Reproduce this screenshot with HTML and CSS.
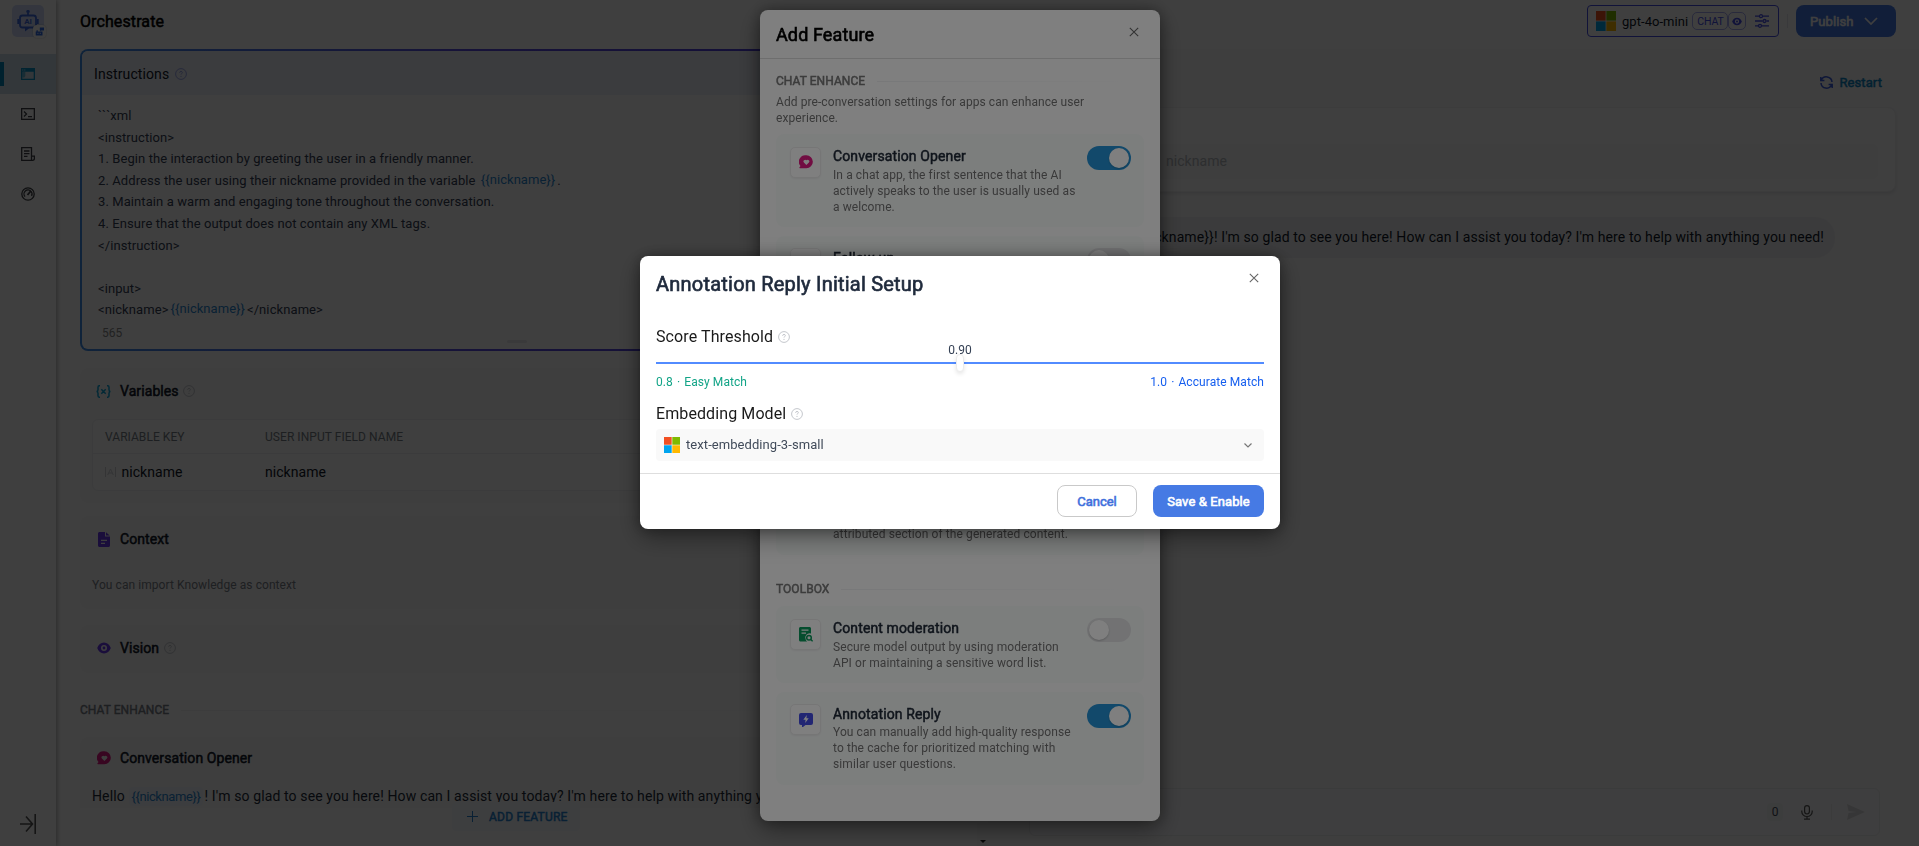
FILE: index.html
```html
<!DOCTYPE html>
<html lang="en">
<head>
<meta charset="utf-8">
<title>Orchestrate</title>
<link rel="stylesheet" href="styles.css">
</head>
<body>
<svg class="defs" aria-hidden="true">
  <symbol id="help" viewBox="0 0 12 12"><circle cx="6" cy="6" r="5.4" fill="none" stroke="currentColor" stroke-width="1"/><path d="M4.6 4.8c0-.9.6-1.4 1.4-1.4s1.4.5 1.4 1.2c0 .9-1.4 1-1.4 2" fill="none" stroke="currentColor"/><circle cx="6" cy="8.4" r=".6" fill="currentColor"/></symbol>
  <symbol id="x" viewBox="0 0 10 10"><path d="M.8.8l8.400 8.400M9.200.8L.8 9.200" stroke="currentColor" fill="none" stroke-width="1.100"/></symbol>
  <symbol id="heart" viewBox="0 0 14 14"><path fill="currentColor" fill-rule="evenodd" d="M7.400.3a6.400 6.400 0 1 1 0 12.900H.9c-.5 0-.7-.5-.4-.9l1-1.300A6.500 6.500 0 0 1 7.400.3zM7.400 10l2.500-2.500a1.600 1.600 0 0 0-2.500-2.200 1.600 1.600 0 0 0-2.500 2.200z"/></symbol>
  <symbol id="eye" viewBox="0 0 14 12"><path fill="currentColor" fill-rule="evenodd" d="M7 .6c3.200 0 5.600 2.200 6.800 5.400C12.600 9.200 10.200 11.400 7 11.400S1.400 9.200.2 6C1.400 2.800 3.800.6 7 .6zM7 3a3 3 0 1 0 0 6 3 3 0 0 0 0-6zm0 1.600a1.400 1.400 0 1 1 0 2.800 1.400 1.400 0 0 1 0-2.800z"/></symbol>
  <symbol id="ms" viewBox="0 0 16 16"><path fill="#f25022" d="M0 0h7.700v7.700H0z"/><path fill="#7fba00" d="M8.300 0H16v7.700H8.300z"/><path fill="#00a4ef" d="M0 8.300h7.700V16H0z"/><path fill="#ffb900" d="M8.300 8.300H16V16H8.300z"/></symbol>
</svg>

<div class="app">
  <nav class="sidebar">
    <div class="app-icon">
      <svg width="22" height="24" viewBox="0 0 22 24" fill="none" stroke="#3f6be0" stroke-width="1.800"><path d="M11 1v5M9.300 2.500h3.400"/><rect x="3" y="6.500" width="16" height="12" rx="2.500"/><path d="M1.200 10v5M20.800 10v5"/><path d="M8 19v3.500l4.500-3.500z" fill="#3f6be0" stroke="none"/></svg>
      <b class="ai">AI</b>
      <span class="badge"><svg width="9" height="9" viewBox="0 0 9 9" fill="#2f6be8"><path d="M4.800.5H9v3H6.300l-1 .8v-.8h-.5zM1.500 3.200h1.300v1.200h4.700v4H.7v-4h.8z"/><path d="M2.300 6.300h1.200M4.800 6.300H6" stroke="#fff" stroke-width=".8"/></svg></span>
    </div>
    <a class="nav-item active"><svg width="14" height="12" viewBox="0 0 14 12"><path fill="currentColor" fill-rule="evenodd" d="M0 0h14v12H0zM1.300 3.800v6.900h11.400V3.800zM1.300 1.500v1h1v-1zm2 0v1h1v-1z"/><path d="M1.300 4h3v4l-1 1.500h-2z" fill="currentColor" opacity=".55"/></svg></a>
    <a class="nav-item"><svg width="14" height="12" viewBox="0 0 14 12" fill="none" stroke="currentColor" stroke-width="1.300"><rect x=".65" y=".65" width="12.700" height="10.700"/><path d="M3 3.500l2.500 2.500L3 8.500M7 8.700h4"/></svg></a>
    <a class="nav-item"><svg width="14" height="14" viewBox="0 0 14 14" fill="none" stroke="currentColor" stroke-width="1.300"><path d="M10.500 9V.7H.7v12.600h11a1.700 1.700 0 0 0 1.700-1.700V9.200h-2.900v4M3 4h5.500M3 6.700h5.500M3 9.300h3.500"/></svg></a>
    <a class="nav-item"><svg width="14" height="14" viewBox="0 0 14 14" fill="none" stroke="currentColor" stroke-width="1.300"><circle cx="7" cy="7" r="6.200"/><circle cx="7" cy="7" r="4" stroke-dasharray="17 8.100" transform="rotate(138 7 7)"/><path d="M6.500 8L9.800 4" stroke-width="1.800"/></svg></a>
    <a class="collapse"><svg width="16" height="20" viewBox="0 0 16 20" fill="none" stroke="currentColor" stroke-width="1.600"><path d="M0 10h12M6 2.500L12.500 10 6 17.500M15.200 0v20"/></svg></a>
  </nav>

  <main class="main">
    <header class="topbar">
      <h1>Orchestrate</h1>
      <div class="top-actions">
        <div class="model"><svg class="ms20"><use href="#ms"/></svg><span class="model-name">gpt-4o-mini</span><span class="tag">CHAT</span><span class="tag tag-eye"><svg width="10" height="9"><use href="#eye"/></svg></span><svg class="sliders" width="14" height="14" viewBox="0 0 14 14" fill="none" stroke="currentColor" stroke-width="1.300"><path d="M0 2.200h4M8 2.200h6M0 7h7.500M11.500 7H14M0 11.800h3M7 11.800h7"/><circle cx="6" cy="2.200" r="1.500"/><circle cx="9.500" cy="7" r="1.500"/><circle cx="5" cy="11.800" r="1.500"/></svg></div>
        <i class="sep"></i>
        <button class="publish">Publish<svg width="14" height="8" viewBox="0 0 14 8" fill="none" stroke="currentColor" stroke-width="1.700"><path d="M1 1l6 6 6-6"/></svg></button>
      </div>
    </header>

    <div class="panes">
      <section class="left">
        <div class="instructions"><div class="ins-inner">
          <div class="ins-head">Instructions<svg class="help"><use href="#help"/></svg></div>
          <pre class="prompt">```xml
&lt;instruction&gt;
1. Begin the interaction by greeting the user in a friendly manner.
2. Address the user using their nickname provided in the variable <em>{{nickname}}</em>.
3. Maintain a warm and engaging tone throughout the conversation.
4. Ensure that the output does not contain any XML tags.
&lt;/instruction&gt;

&lt;input&gt;
&lt;nickname&gt;<em>{{nickname}}</em>&lt;/nickname&gt;</pre>
          <div class="ins-foot"><span>565</span><i class="grip"></i></div>
        </div></div>

        <div class="panel variables">
          <h2><svg class="ic cyan" width="15" height="13" viewBox="0 0 15 13" fill="none" stroke="currentColor" stroke-width="1.500"><path d="M4 .8H3.200Q2 .8 2 2.200v2.500Q2 6.500.5 6.500 2 6.500 2 8.300v2.500q0 1.400 1.200 1.400H4M11 .8h.8q1.200 0 1.200 1.400v2.500q0 1.800 1.500 1.800-1.500 0-1.500 1.800v2.500q0 1.400-1.200 1.400H11M5.300 4.300l4.400 4.400M9.700 4.300L5.300 8.700"/></svg>Variables<svg class="help"><use href="#help"/></svg></h2>
          <div class="table">
            <div class="tr th"><span>VARIABLE KEY</span><span>USER INPUT FIELD NAME</span></div>
            <div class="tr"><span><svg class="va" width="11" height="10" viewBox="0 0 11 10" fill="none" stroke="currentColor"><path d="M.5 0v10M10.500 0v10M2.700 8l2.800-6 2.800 6M3.700 6h3.600"/></svg>nickname</span><span>nickname</span></div>
          </div>
        </div>

        <div class="panel context">
          <h2><svg class="ic purple" width="12" height="15" viewBox="0 0 12 15"><path fill="currentColor" fill-rule="evenodd" d="M1.500 0H7v4.500h5v9c0 .8-.7 1.500-1.500 1.500h-9C.7 15 0 14.300 0 13.500v-12C0 .7.7 0 1.500 0zM3 7.700V9h6V7.700zm0 3V12h4v-1.300zM8 .3L11.700 3.500H8z"/></svg>Context</h2>
          <p>You can import Knowledge as context</p>
        </div>

        <div class="panel vision">
          <h2><svg class="ic purple" width="14" height="12"><use href="#eye"/></svg>Vision<svg class="help"><use href="#help"/></svg></h2>
        </div>

        <div class="group">CHAT ENHANCE<i></i></div>

        <div class="panel opener">
          <h2><svg class="ic pink" width="14" height="14"><use href="#heart"/></svg>Conversation Opener</h2>
          <p>Hello <em>{{nickname}}</em>! I'm so glad to see you here! How can I assist you today? I'm here to help with anything you need!</p>
        </div>
        <div class="add-bar"><button class="add"><svg width="11" height="11" viewBox="0 0 11 11" stroke="currentColor" fill="none"><path d="M5.500 0v11M0 5.500h11"/></svg>ADD FEATURE</button></div>
      </section>
      <div class="scroll"><i></i></div>

      <section class="right">
        <div class="restart"><svg width="13" height="13" viewBox="0 0 13 13" fill="none" stroke="currentColor" stroke-width="1.500"><path d="M.8 1v3.600h3.600M1.200 4.400A5.600 5.600 0 0 1 12 6M12.200 12V8.400H8.600M11.800 8.600A5.600 5.600 0 0 1 1 7"/></svg>Restart</div>
        <div class="form"><div class="field">nickname</div></div>
        <div class="chat"><div class="bubble">Hello {{nickname}}! I'm so glad to see you here! How can I assist you today? I'm here to help with anything you need!</div></div>
        <div class="composer"><span class="count">0</span><svg class="mic" width="12" height="15" viewBox="0 0 12 15" fill="none" stroke="currentColor" stroke-width="1.200"><rect x="3.600" y=".6" width="4.800" height="8.400" rx="2.400"/><path d="M.8 5.500v1.300a5.200 4.700 0 0 0 10.400 0V5.500M6 11.500V14M3 14.200h6"/></svg><i></i><svg width="18" height="16" viewBox="0 0 18 16" fill="currentColor" class="send"><path d="M0 0l18 8L0 16l1.500-7L9 8 1.500 7z"/></svg></div>
      </section>
    </div>
  </main>
</div>

<div class="overlay o1">
  <div class="modal features">
    <div class="f-head">Add Feature<svg class="close"><use href="#x"/></svg></div>
    <div class="f-body">
      <div class="group strong">CHAT ENHANCE<i></i></div>
      <p class="desc">Add pre-conversation settings for apps can enhance user experience.</p>
      <div class="cards top">
        <div class="card"><span class="tile pink"><svg width="14" height="14"><use href="#heart"/></svg></span><div class="txt"><h3>Conversation Opener</h3><p>In a chat app, the first sentence that the AI actively speaks to the user is usually used as a welcome.</p></div><span class="toggle on"></span></div>
        <div class="card"><span class="tile"></span><div class="txt"><h3>Follow-up</h3><p>Setting up next questions suggestion can give users a better chat.</p></div><span class="toggle"></span></div>
        <div class="card grow"><span class="tile"></span><div class="txt"><h3>Text to Speech</h3></div><span class="toggle"></span></div>
        <div class="card grow"><span class="tile"></span><div class="txt"><h3>Speech to Text</h3></div><span class="toggle"></span></div>
        <div class="card"><span class="tile"></span><div class="txt"><h3>Citations and Attributions</h3><p>Show source document and<br>attributed section of the generated content.</p></div><span class="toggle"></span></div>
      </div>
      <div class="group strong tb">TOOLBOX<i></i></div>
      <div class="cards">
        <div class="card"><span class="tile green"><svg width="14" height="15" viewBox="0 0 14 15"><path fill="currentColor" fill-rule="evenodd" d="M1.500 0h9c.8 0 1.500.7 1.500 1.500v5a4.300 4.300 0 0 0-5.300 6c.3.900.8 1.500 1.500 2H1.500C.7 14.500 0 13.800 0 13V1.500C0 .7.7 0 1.500 0zM2.500 2.500v1.200h7V2.500zm0 3v1.200h4.500V5.500z"/><circle cx="10" cy="10.700" r="2.300" fill="none" stroke="currentColor" stroke-width="1.500"/><path d="M11.600 12.300l2 2" stroke="currentColor" stroke-width="1.500"/></svg></span><div class="txt"><h3>Content moderation</h3><p>Secure model output by using moderation API or maintaining a sensitive word list.</p></div><span class="toggle"></span></div>
        <div class="card"><span class="tile indigo"><svg width="14" height="14" viewBox="0 0 14 14"><path fill="currentColor" fill-rule="evenodd" d="M2 0h10a2 2 0 0 1 2 2v8a2 2 0 0 1-2 2H6.500L4 14H3v-2H2a2 2 0 0 1-2-2V2a2 2 0 0 1 2-2zm5.800 2L4.300 6.700h2.300L6.200 10l3.500-4.700H7.400z"/></svg></span><div class="txt"><h3>Annotation Reply</h3><p>You can manually add high-quality response to the cache for prioritized matching with similar user questions.</p></div><span class="toggle on"></span></div>
      </div>
    </div>
  </div>
</div>

<div class="overlay o2">
  <div class="modal setup">
    <div class="s-body">
      <div class="s-title">Annotation Reply Initial Setup<svg class="close"><use href="#x"/></svg></div>
      <div class="label">Score Threshold<svg class="help"><use href="#help"/></svg></div>
      <div class="slider"><span class="val">0.90</span><span class="thumb"></span></div>
      <div class="ends"><span class="easy">0.8 <i>·</i> Easy Match</span><span class="acc">1.0 <i>·</i> Accurate Match</span></div>
      <div class="label l2">Embedding Model<svg class="help"><use href="#help"/></svg></div>
      <div class="select"><svg class="ms16"><use href="#ms"/></svg><span>text-embedding-3-small</span><svg class="chev" width="8" height="5" viewBox="0 0 8 5" fill="none" stroke="currentColor" stroke-width="1.200"><path d="M.5.5L4 4 7.500.5"/></svg></div>
    </div>
    <div class="s-foot"><button class="cancel">Cancel</button><button class="save">Save &amp; Enable</button></div>
  </div>
</div>
</body>
</html>
```
FILE: styles.css
```css
* { box-sizing: border-box; }
body { margin: 0; height: 846px; overflow: hidden; background: #fff; font-family: Roboto, sans-serif; color: #101828; font-size: 14px; }
h1, h2, h3, p, pre { margin: 0; font-weight: 400; }
em, i { font-style: normal; }
svg { flex: none; display: block; }
button { font-family: inherit; border: 0; padding: 0; }
.defs { position: absolute; width: 0; height: 0; }
.help { width: 12px; height: 12px; color: #c4c7cc; }

.app { display: flex; height: 846px; }
.sidebar { width: 56px; flex: none; display: flex; flex-direction: column; align-items: center; padding-top: 5px; box-shadow: 1px 0 5px rgba(0, 0, 0, .35); z-index: 1; }
.app-icon { position: relative; width: 32px; height: 32px; border-radius: 5px; background: #d0dbf8; display: flex; justify-content: center; padding-top: 4px; margin-bottom: 17px; }
.ai { position: absolute; left: 0; width: 32px; top: 11px; text-align: center; font-size: 8px; line-height: 11px; color: #3f6be0; }
.badge { position: absolute; left: 21px; top: 20px; width: 13px; height: 13px; border-radius: 4px; background: #fff; box-shadow: 0 0 2px rgba(0, 0, 0, .25); display: flex; align-items: center; justify-content: center; }
.nav-item { width: 56px; height: 40px; display: flex; align-items: center; justify-content: center; color: #3c3f44; }
.nav-item.active { background: #ccdee8; color: #0891c7; position: relative; }
.nav-item.active::before { content: ""; position: absolute; left: 0; top: 8px; width: 4px; height: 24px; background: #0284b8; }
.collapse { margin-top: auto; margin-bottom: 12px; color: #555; }

.main { flex: 1; min-width: 0; display: flex; flex-direction: column; }
.topbar { height: 49px; flex: none; display: flex; justify-content: space-between; padding: 5px 23px 0 24px; }
h1 { font-size: 16px; line-height: 33px; color: #000; -webkit-text-stroke: .5px; letter-spacing: .1px; }
.top-actions { display: flex; height: 32px; align-items: center; }
.model { width: 192px; height: 32px; border: 1px solid #444ce7; border-radius: 4px; display: flex; align-items: center; padding: 0 8px; }
.ms20 { width: 20px; height: 20px; }
.model-name { font-size: 13px; margin: 0 4px 0 6px; color: #101828; letter-spacing: .05px; }
.tag { height: 18px; border: 1px solid #a4a9f0; border-radius: 5px; font-size: 10.500px; line-height: 17px; color: #444ce7; padding: 0 4px; width: 36px; text-align: center; letter-spacing: -.1px; }
.tag-eye { width: 18px; padding: 0 3px; display: flex; align-items: center; }
.sliders { color: #444ce7; margin-left: 9px; }
.sep { width: 1px; height: 14px; background: #e4e7ec; margin: 0 8px; }
.publish { width: 100px; height: 32px; border-radius: 8px; background: #467ae4; color: #fff; font-size: 13px; display: flex; align-items: center; gap: 10px; padding-left: 14px; -webkit-text-stroke: .6px; letter-spacing: .1px; }

.panes { flex: 1; min-height: 0; display: flex; }
.left { width: 921px; padding: 0 24px; display: flex; flex-direction: column; flex: none; overflow: hidden; }
.instructions { height: 302px; flex: none; padding: 2px; border-radius: 8px; background: linear-gradient(90deg, #3f8de8, #5a4ae0 45%, #4638d8); }
.ins-inner { height: 298px; border-radius: 6px; background: #fff; overflow: hidden; display: flex; flex-direction: column; }
.ins-head { height: 44px; background: #eef1fb; padding: 1px 0 0 12px; display: flex; align-items: center; gap: 6px; line-height: 44px; letter-spacing: .1px; }
.ins-head .help { color: #9aa5e8; }
.prompt { padding: 10px 16px 0; font-family: Roboto, sans-serif; font-size: 13px; line-height: 21.600px; letter-spacing: .09px; color: #344054; height: 226px; }
.prompt em { color: #2a86d0; padding: 0 2px; position: relative; top: -1px; letter-spacing: .04px; }
.ins-foot { display: flex; font-size: 12px; color: #888; line-height: 24px; padding-left: 20px; position: relative; }
.grip { position: absolute; left: 425px; top: 19px; width: 20px; height: 3px; border-radius: 2px; background: #e8e9ec; }

.panel { background: #fafafa; border-radius: 8px; padding: 0 12px; flex: none; }
.panel h2 { font-size: 14px; display: flex; align-items: center; height: 46px; -webkit-text-stroke: .5px; color: #101828; letter-spacing: .08px; padding-left: 4px; }
.panel h2 .help { margin-left: 5px; -webkit-text-stroke: 0; }
.ic { margin-right: 9px; }
.cyan { color: #0ba5d8; } .purple { color: #6938ef; } .pink { color: #e31b84; } .green { color: #0a9a5c; } .indigo { color: #444ce7; }
.variables { margin-top: 17px; height: 135px; }
.variables h2 .help { margin-left: 4px; }
.table { margin-top: 5px; border: 1px solid #eeeff1; border-radius: 6px; height: 72px; background: #fcfcfc; }
.tr { display: flex; height: 36px; align-items: center; padding-left: 12px; color: #101828; letter-spacing: .05px; }
.tr > span { width: 160px; display: flex; align-items: center; white-space: nowrap; }
.tr.th { height: 34px; border-bottom: 1px solid #eeeff1; font-size: 12px; color: #777c86; }
.va { margin-right: 5.500px; color: #d0d2d6; }
.context { margin-top: 13px; height: 93px; }
.context h2 { height: 46px; padding-left: 6px; }
.context .ic { margin-right: 10px; }
.context p { font-size: 12px; color: #7b8089; margin-top: 15px; letter-spacing: .07px; line-height: 16px; }
.vision { margin-top: 16px; height: 48px; }
.vision h2 { height: 46px; padding-left: 5px; }
.group { display: flex; align-items: center; font-size: 12px; color: #777c86; line-height: 16px; flex: none; white-space: nowrap; -webkit-text-stroke: .4px; letter-spacing: .05px; }
.group i { flex: 1; height: 1px; margin-left: 12px; background: linear-gradient(90deg, #f0f1f3, rgba(240, 241, 243, 0)); }
.left .group { margin: 29px 0 19px; }
.opener { height: 71px; border-radius: 8px 8px 0 0; overflow: hidden; }
.opener h2 { height: 41px; padding-left: 5px; }
.opener p { font-size: 14px; white-space: nowrap; color: #222b38; line-height: 20px; margin-top: 8px; letter-spacing: .12px; }
.opener em { color: #2a86d0; font-size: 13px; background: #f2f5fc; border-radius: 4px; padding: 2px 3px 2px 2px; margin: 0 1px; letter-spacing: -.4px; }
.add-bar { position: relative; display: flex; margin-left: 372px; margin-top: -6px; }
.add { width: 128px; height: 29px; border-radius: 4px; background: #f7fafd; color: #2583d0; display: flex; align-items: center; gap: 11px; padding-left: 15px; font-size: 12px; -webkit-text-stroke: .5px; letter-spacing: .22px; }
.add svg { -webkit-text-stroke: 0; }
.scroll { width: 11px; background: #fafafa; display: flex; align-items: flex-end; justify-content: center; padding-bottom: 3px; flex: none; }
.scroll i { border: 3px solid transparent; border-top-color: #222; border-bottom: 0; }

.right { flex: 1; background: #f8f8f9; padding: 0 23px 0 41px; display: flex; flex-direction: column; }
.restart { align-self: flex-end; margin: 17px 14px 0 0; height: 32px; display: flex; align-items: center; gap: 6px; color: #0a84c4; font-size: 13px; -webkit-text-stroke: .5px; letter-spacing: .1px; }
.restart svg { color: #3a5ce0; }
.form { margin-top: 9px; height: 85px; border: 1px solid #f0f0f2; border-radius: 8px; background: #fcfcfd; box-shadow: 0 2px 3px rgba(0, 0, 0, .08); padding: 36px 17px 0 16px; }
.field { height: 35px; background: #f8f8f9; border-radius: 6px; line-height: 34px; padding-left: 120px; color: #b5b8be; letter-spacing: .05px; }
.chat { display: flex; margin-top: 25px; padding-right: 61px; justify-content: flex-end; }
.bubble { width: 750px; height: 41px; border-radius: 20px; background: #efeff1; line-height: 41px; padding-right: 11px; text-align: right; color: #101828; white-space: nowrap; letter-spacing: .1px; }
.composer { margin-top: auto; margin-bottom: 10px; margin-right: 16px; height: 48px; border: 1px solid #ebecee; border-radius: 6px; background: #fbfbfc; display: flex; align-items: center; justify-content: flex-end; padding-right: 14px; color: #596273; }
.count { font-size: 12px; width: 16px; height: 18px; line-height: 18px; text-align: center; background: #f3f4f6; border-radius: 4px; color: #444c59; }
.mic { margin: 0 18px 0 18px; color: #555; }
.composer i { width: 1px; height: 16px; background: #eee; margin-right: 15px; }
.send { color: #dadbde; }

.overlay { position: fixed; inset: 0; background: rgba(0, 0, 0, .5); display: flex; justify-content: center; align-items: flex-start; z-index: 10; }
.o1 { padding-top: 10px; } .o2 { padding-top: 256px; z-index: 20; }
.modal { background: #fff; border-radius: 8px; box-shadow: 0 8px 24px rgba(0, 0, 0, .4), 0 0 14px rgba(0, 0, 0, .3); overflow: hidden; }
.features { width: 400px; height: 811px; margin-left: 1px; }
.f-head { height: 49px; border-bottom: 1px solid #dcdcdc; padding: 0 21px 0 16px; display: flex; justify-content: space-between; font-size: 18px; line-height: 49px; color: #000; -webkit-text-stroke: .6px; letter-spacing: .12px; }
.close { width: 10px; height: 10px; color: #666; -webkit-text-stroke: 0; }
.f-head .close { margin-top: 17px; }
.f-body { padding: 14px 16px 0; }
.f-body .group { color: #787878; height: 16px; -webkit-text-stroke: .5px; }
.desc { font-size: 12px; line-height: 16px; color: #737373; margin-top: 5px; letter-spacing: .08px; }
.cards { display: flex; flex-direction: column; gap: 8.600px; }
.cards.top { margin-top: 8px; height: 421px; }
.card { display: flex; align-items: flex-start; background: #f9fcfb; border-radius: 8px; padding: 12px 13px 12.900px 14px; min-height: 0; }
.card.grow { flex: 1; }
.tile { width: 31px; height: 31px; flex: none; border-radius: 5px; border: 1px solid #ededed; background: #fff; box-shadow: 0 1px 2px rgba(0, 0, 0, .06); display: flex; align-items: center; justify-content: center; margin-top: .5px; }
.txt { flex: 1; margin-left: 12px; }
.txt h3 { font-size: 14px; line-height: 20.500px; color: #1f2937; -webkit-text-stroke: .5px; letter-spacing: .12px; }
.txt p { font-size: 12px; line-height: 16px; color: #737373; letter-spacing: .09px; width: 246px; }
.toggle { width: 44px; height: 24px; border-radius: 12px; background: #e4e5e7; flex: none; padding: 2px; display: flex; }
.toggle::after { content: ""; width: 20px; height: 20px; border-radius: 50%; background: #fff; box-shadow: 0 1px 2px rgba(0, 0, 0, .2); }
.toggle.on { background: #2593d6; justify-content: flex-end; }
.f-body .tb { margin: 26px 0 9px; }

.setup { width: 640px; height: 273px; margin-left: 1px; display: flex; flex-direction: column; }
.s-body { height: 218px; padding: 12px 16px 0; border-bottom: 1px solid #dedede; }
.s-title { display: flex; justify-content: space-between; font-size: 20px; line-height: 32px; color: #1f2a3c; -webkit-text-stroke: .65px; letter-spacing: .22px; }
.s-title .close { margin: 5px 5px 0 0; }
.label { display: flex; align-items: center; gap: 5px; font-size: 16px; line-height: 24px; color: #1a1a1a; margin-top: 24.500px; letter-spacing: .1px; }
.slider { position: relative; height: 2px; background: #528bff; margin-top: 13.500px; }
.val { position: absolute; left: 50%; top: -20px; width: 40px; margin-left: -20px; text-align: center; font-size: 12px; line-height: 16px; color: #344054; }
.thumb { position: absolute; left: 50%; top: -8px; width: 8px; height: 18px; margin-left: -4px; border-radius: 4px; background: #fff; border: 1px solid #ececec; box-shadow: 0 2px 4px rgba(0, 0, 0, .1); }
.ends { display: flex; justify-content: space-between; font-size: 12px; line-height: 16px; margin-top: 10px; letter-spacing: .08px; }
.ends i { margin: 0 1px; }
.easy { color: #12a487; } .acc { color: #155eef; }
.l2 { margin-top: 11.500px; }
.select { display: flex; align-items: center; height: 32px; background: #f9f9f9; border-radius: 4px; margin-top: 3.500px; padding: 0 12px 0 8px; font-size: 13px; color: #414b5a; letter-spacing: .07px; }
.select span { margin-bottom: 2px; }
.ms16 { width: 16px; height: 16px; margin-right: 6px; }
.chev { margin-left: auto; color: #777; }
.s-foot { display: flex; justify-content: flex-end; gap: 16px; padding: 11px 16px 0; }
.s-foot button { height: 32px; border-radius: 8px; font-size: 13px; -webkit-text-stroke: .6px; }
.s-foot .cancel { width: 80px; background: #fff; border: 1px solid #c9c9c9; color: #3f70dc; }
.save { width: 111px; background: #467ae4; color: #fff; letter-spacing: .1px; }
```
